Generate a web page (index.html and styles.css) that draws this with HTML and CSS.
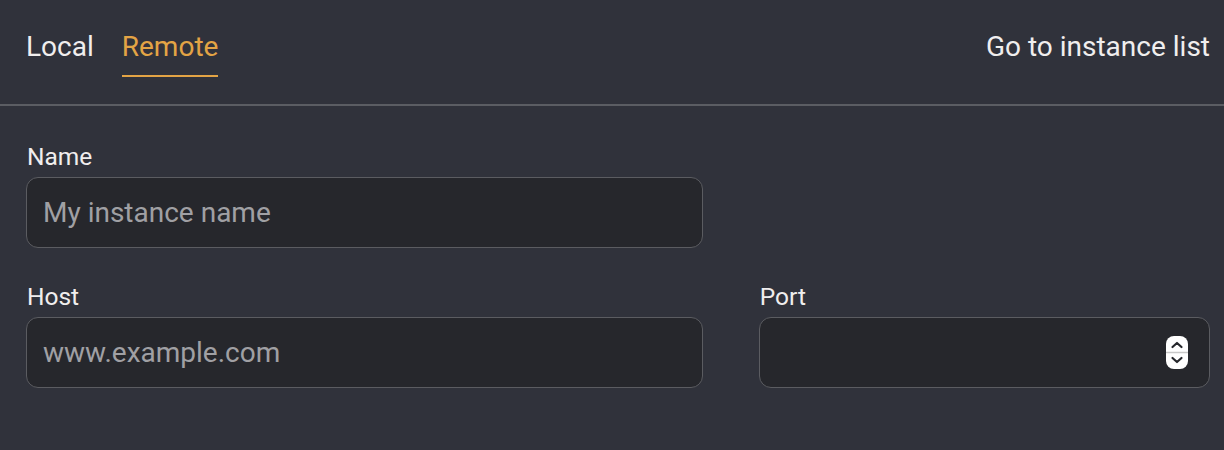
FILE: index.html
```html
<!DOCTYPE html>
<html>
<head>
<meta charset="utf-8">
<link rel="stylesheet" href="styles.css">
</head>
<body>
<header class="topbar">
  <nav class="tabs">
    <a class="tab">Local</a>
    <a class="tab active">Remote</a>
  </nav>
  <a class="link">Go to instance list</a>
</header>
<main class="form">
  <div class="row">
    <div class="field">
      <label class="label">Name</label>
      <div class="input"><span class="placeholder">My instance name</span></div>
    </div>
  </div>
  <div class="row">
    <div class="field">
      <label class="label">Host</label>
      <div class="input"><span class="placeholder">www.example.com</span></div>
    </div>
    <div class="field">
      <label class="label">Port</label>
      <div class="input spin-input">
        <svg class="spinner" width="22" height="33" viewBox="0 0 22 33">
          <rect x="0" y="0" width="22" height="33" rx="8" fill="#ffffff"/>
          <line x1="0" y1="16.5" x2="22" y2="16.5" stroke="#c8c8c8" stroke-width="1.5"/>
          <path d="M6.5 11 L11 7 L15.5 11" fill="none" stroke="#26272c" stroke-width="2.2" stroke-linecap="round" stroke-linejoin="round"/>
          <path d="M6.5 22 L11 26 L15.5 22" fill="none" stroke="#26272c" stroke-width="2.2" stroke-linecap="round" stroke-linejoin="round"/>
        </svg>
      </div>
    </div>
  </div>
</main>
</body>
</html>
```
FILE: styles.css
```css
* { box-sizing: border-box; }
html, body {
  margin: 0;
  padding: 0;
  background: #30323b;
  color: #f0eeee;
  font-family: Roboto, "Liberation Sans", sans-serif;
}
.topbar {
  display: flex;
  justify-content: space-between;
  align-items: flex-start;
  padding: 0 14px 0 26px;
  height: 106px;
  border-bottom: 2px solid #5b5d63;
}
.tabs {
  display: flex;
  gap: 28px;
}
.tab {
  font-size: 28px;
  line-height: 32px;
  padding-top: 31px;
  padding-bottom: 12px;
  border-bottom: 2px solid transparent;
  color: #f0eeee;
}
.tab.active {
  color: #e3a445;
  border-bottom-color: #e3a445;
}
.link {
  font-size: 28px;
  line-height: 32px;
  padding-top: 31px;
  color: #f0eeee;
}
.form {
  padding: 37px 14px 0 26px;
  display: flex;
  flex-direction: column;
  gap: 35px;
}
.row {
  display: grid;
  grid-template-columns: 3fr 2fr;
  column-gap: 56px;
}
.field {
  display: flex;
  flex-direction: column;
  gap: 7px;
}
.label {
  font-size: 24.5px;
  line-height: 27px;
  font-weight: 400;
  padding-left: 1px;
}
.input {
  height: 71px;
  background: #26272c;
  border: 1.5px solid #5b5c61;
  border-radius: 12px;
  display: flex;
  align-items: center;
  padding: 0 16px;
}
.placeholder {
  font-size: 28px;
  color: #a0a0a4;
}
.spin-input {
  justify-content: flex-end;
  padding-right: 21px;
}
.spinner { display: block; }
```
